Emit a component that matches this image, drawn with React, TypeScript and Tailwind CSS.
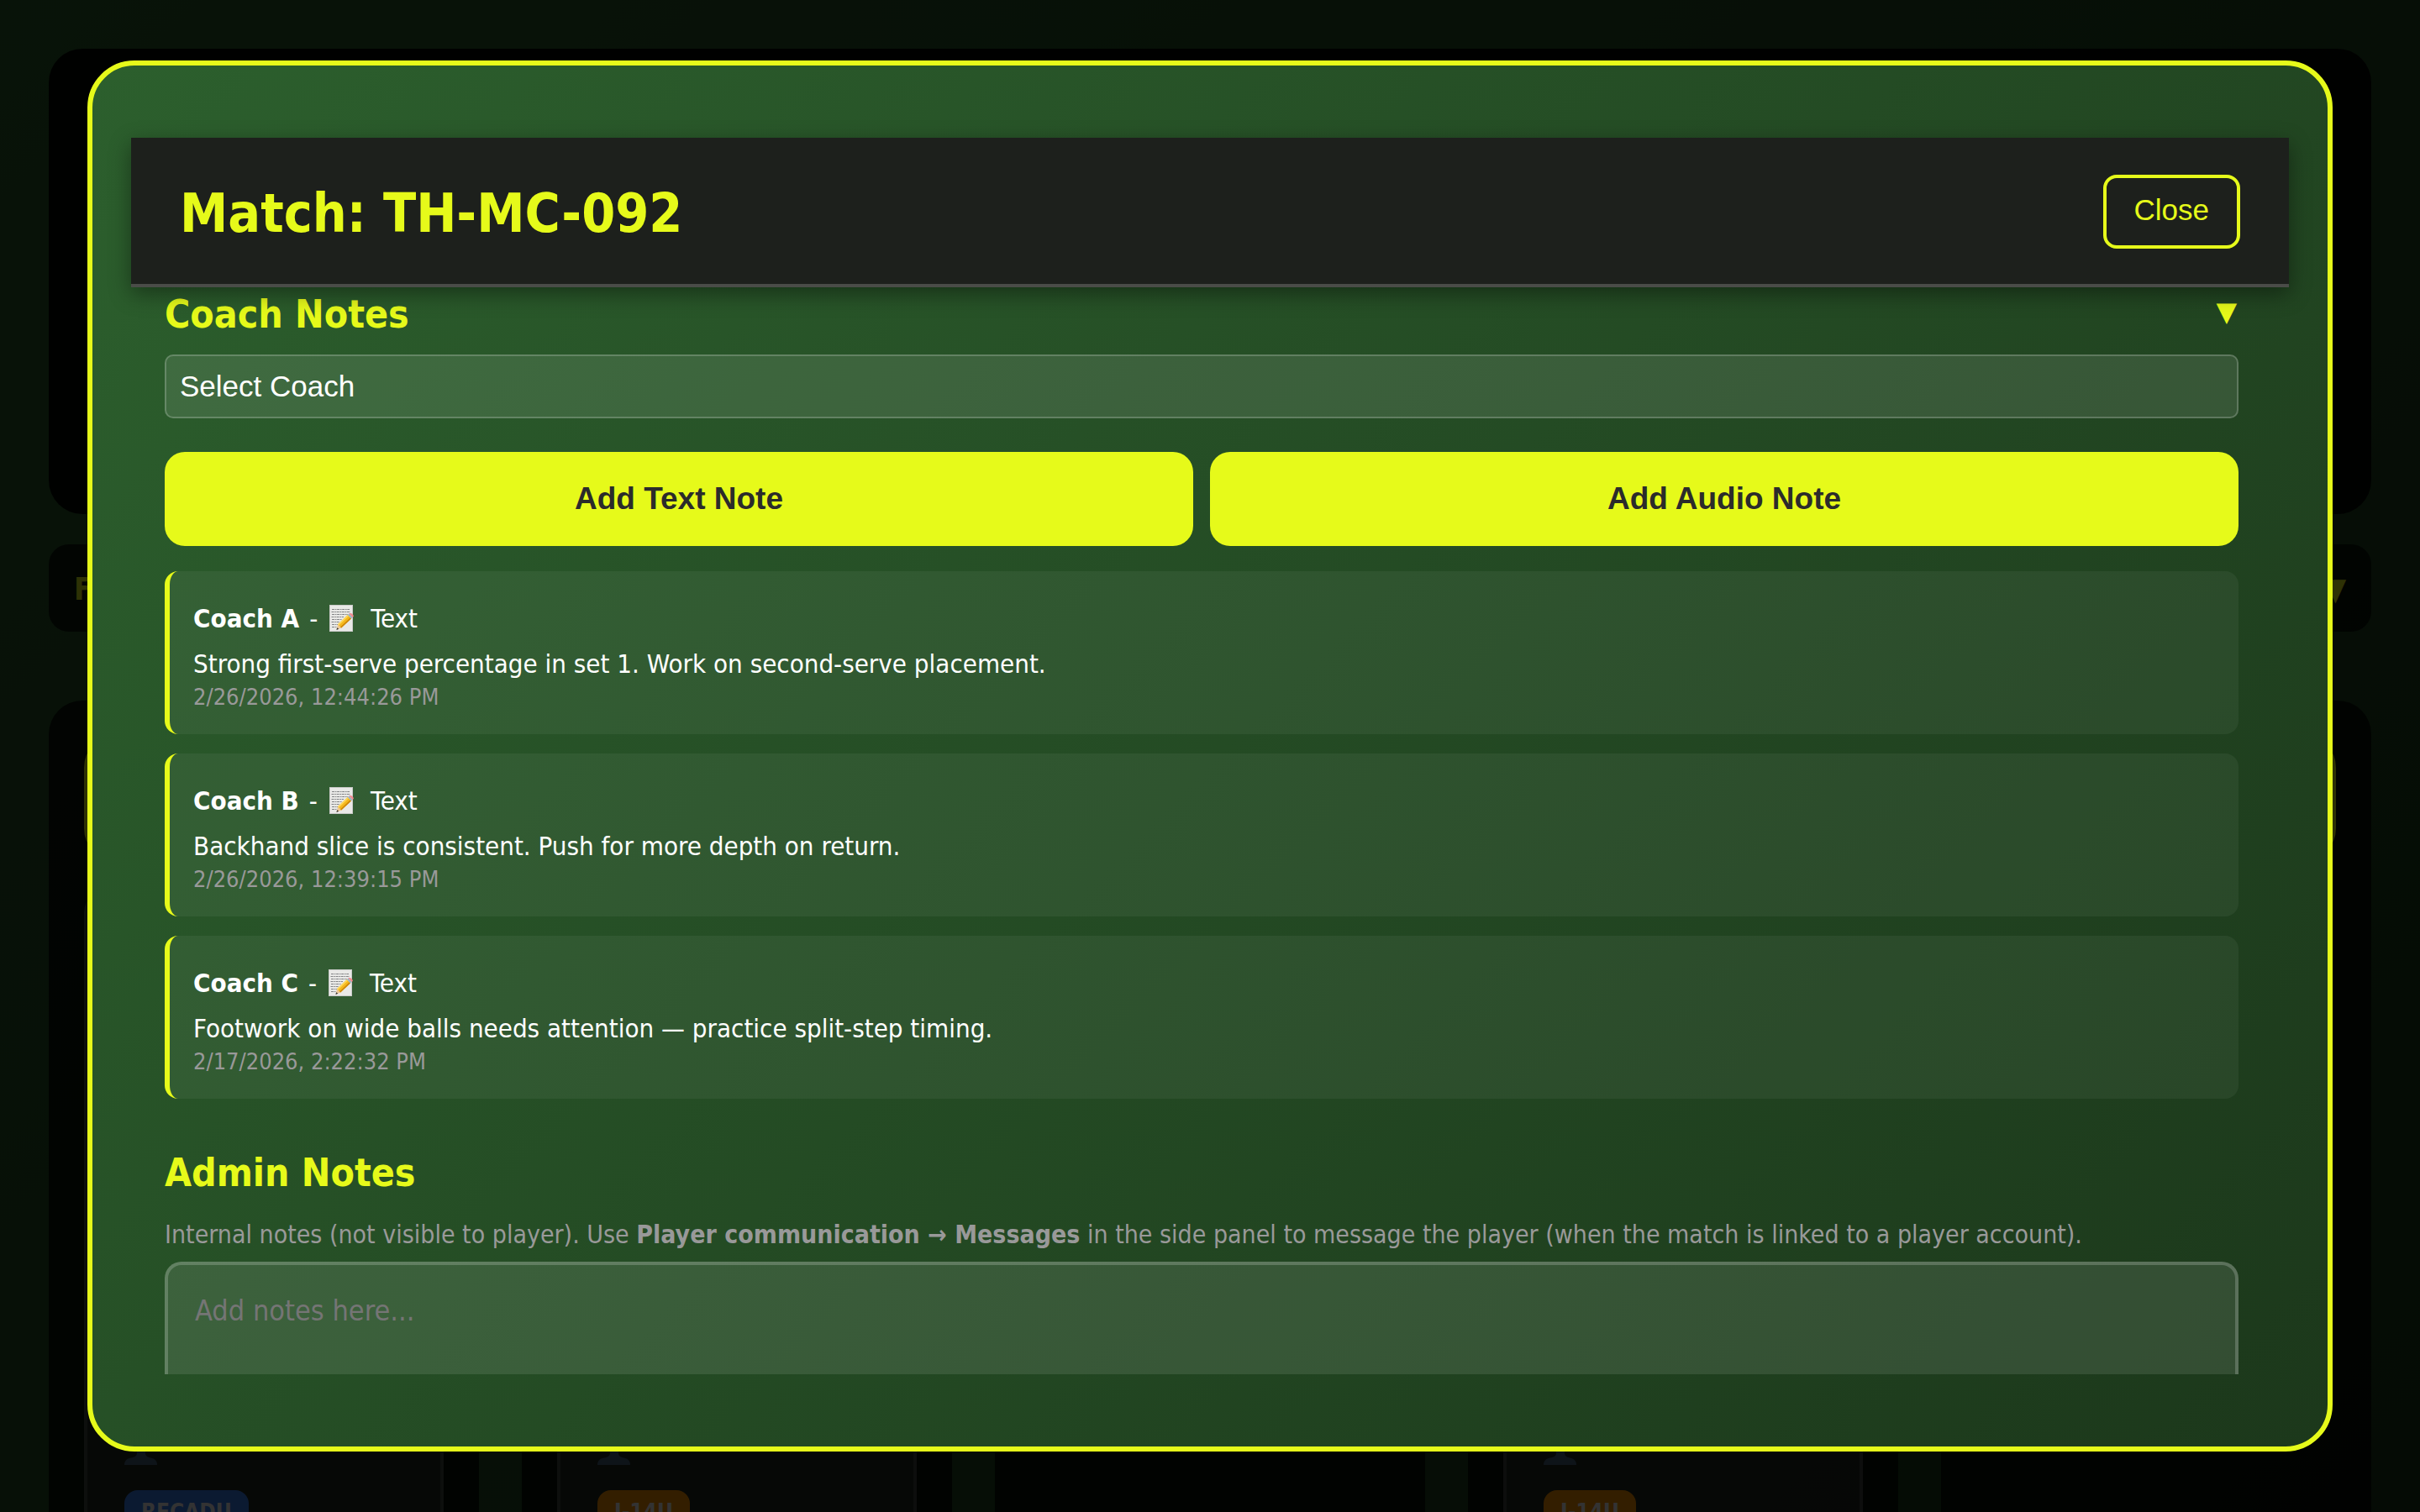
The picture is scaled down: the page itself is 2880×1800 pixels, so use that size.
import { useState } from "react";

type Note = { id: number; coach: string; kind: string; body: string; date: string };

const NOTES: Note[] = [
  {
    id: 1,
    coach: "Coach A",
    kind: "Text",
    body: "Strong first-serve percentage in set 1. Work on second-serve placement.",
    date: "2/26/2026, 12:44:26 PM",
  },
  {
    id: 2,
    coach: "Coach B",
    kind: "Text",
    body: "Backhand slice is consistent. Push for more depth on return.",
    date: "2/26/2026, 12:39:15 PM",
  },
  {
    id: 3,
    coach: "Coach C",
    kind: "Text",
    body: "Footwork on wide balls needs attention — practice split-step timing.",
    date: "2/17/2026, 2:22:32 PM",
  },
];

type Column = { id: number; badge?: string; badgeClass?: string };

const COLUMNS: Column[] = [
  { id: 1, badge: "RECADU", badgeClass: "bg-[#3b82f6]" },
  { id: 2, badge: "J-14U", badgeClass: "bg-[#ff9800]" },
  { id: 3 },
  { id: 4, badge: "J-14U", badgeClass: "bg-[#ff9800]" },
  { id: 5 },
];

export default function App() {
  return (
    <div className="relative h-screen overflow-hidden bg-linear-135 from-[#2c5f2d] to-[#1a3a1a] font-['DejaVu_Sans_Condensed','DejaVu_Sans',sans-serif] text-white">
      <Board />
      <div className="absolute inset-0 flex items-center justify-center bg-black/80 px-26 py-18">
        <MatchDialog />
      </div>
    </div>
  );
}

function Board() {
  return (
    <div aria-hidden="true" className="flex h-full flex-col px-[58px] pt-[58px]">
      <div className="h-[554px] shrink-0 rounded-[40px] bg-black/90" />
      <div className="mt-9 flex h-[104px] shrink-0 items-center justify-between rounded-3xl bg-black/70 px-[30px] pt-1 text-[37px] font-bold text-[#e6fa1a]">
        <span>Filters</span>
        <span>▼</span>
      </div>
      <div className="mt-[82px] grid min-h-0 flex-1 grid-cols-5 gap-[51px]">
        {COLUMNS.map((column) => (
          <div key={column.id} className="flex flex-col rounded-t-[40px] bg-black/75 px-[42px] pt-10">
            <div className="h-[152px] shrink-0 rounded-[40px] border-4 border-[#e6fa1a]" />
            {column.badge && (
              <div className="mt-9 flex flex-1 flex-col rounded-t-3xl border-4 border-white/15 bg-white/10 px-11 pt-[618px]">
                <PersonIcon />
                <span
                  className={`mt-[30px] self-start rounded-2xl px-5 pt-2.5 text-[26px] leading-8 font-bold ${column.badgeClass}`}
                >
                  {column.badge}
                </span>
              </div>
            )}
          </div>
        ))}
      </div>
    </div>
  );
}

function MatchDialog() {
  const [open, setOpen] = useState(true);

  return (
    <div
      role="dialog"
      aria-labelledby="match-title"
      className="flex h-full w-full flex-col rounded-[56px] border-6 border-[#e6fa1a] bg-linear-135 from-[#2c5f2d] to-[#1c381b] px-[46px] py-[86px]"
    >
      <header className="relative z-10 flex shrink-0 items-center justify-between border-b-4 border-[#4a4c48] bg-[#1d201c] px-[58px] pt-[44px] pb-[42px] shadow-[0_8px_24px_rgba(0,0,0,0.4)]">
        <h2 id="match-title" className="pt-1 text-[64px] leading-20 font-bold text-[#e6fa1a]">
          Match: TH-MC-092
        </h2>
        <button
          type="button"
          className="rounded-2xl border-4 border-[#e6fa1a] px-[33px] pt-[18px] pb-[22px] font-['Liberation_Sans',sans-serif] text-[35px] leading-10 text-[#e6fa1a]"
        >
          Close
        </button>
      </header>

      <div className="min-h-0 flex-1 overflow-hidden pr-[60px] pl-10">
        <section>
          <div className="flex items-center justify-between pb-1 text-[#e6fa1a]">
            <h3 className="text-[46px] leading-16 font-bold">Coach Notes</h3>
            <button
              type="button"
              aria-label="Toggle coach notes"
              aria-expanded={open}
              onClick={() => setOpen(!open)}
              className="pr-0.5 pb-1.5 font-['DejaVu_Sans',sans-serif] text-[32px] leading-10"
            >
              ▼
            </button>
          </div>

          {open && (
            <>
              <select
                aria-label="Coach"
                className="mt-3 block h-19 w-full appearance-none rounded-[10px] border-2 border-white/20 bg-white/10 px-4 font-['Liberation_Sans',sans-serif] text-[35px] text-white"
              >
                <option>Select Coach</option>
              </select>
              <div className="mt-10 flex gap-5">
                <NoteButton label="Add Text Note" />
                <NoteButton label="Add Audio Note" />
              </div>
              <ul className="mt-[30px] space-y-[23px]">
                {NOTES.map((note) => (
                  <NoteCard key={note.id} note={note} />
                ))}
              </ul>
            </>
          )}
        </section>

        <section className="mt-14">
          <h3 className="text-[46px] leading-16 font-bold text-[#e6fa1a]">Admin Notes</h3>
          <p className="mt-[22px] text-[30px] leading-10 text-[#999]">
            Internal notes (not visible to player). Use <strong>Player communication → Messages</strong> in the side
            panel to message the player (when the match is linked to a player account).
          </p>
          <textarea
            aria-label="Admin notes"
            placeholder="Add notes here..."
            className="mt-3 block h-60 w-full resize-none rounded-[20px] border-4 border-white/20 bg-white/10 px-8 py-[30px] text-[34px] leading-12 placeholder:text-[#757575]"
          />
        </section>
      </div>
    </div>
  );
}

function NoteButton({ label }: { label: string }) {
  return (
    <button
      type="button"
      className="h-28 flex-1 rounded-3xl bg-[#e6fa1a] font-['Liberation_Sans',sans-serif] text-[37px] font-bold text-[#2b2b2b]"
    >
      {label}
    </button>
  );
}

function NoteCard({ note }: { note: Note }) {
  return (
    <li className="h-[194px] rounded-2xl border-l-6 border-[#e6fa1a] bg-white/5 px-7 pt-9 text-[31px]">
      <div className="flex items-center leading-10">
        <strong>{note.coach}</strong>
        <span className="ml-3">-</span>
        <MemoIcon />
        <span className="ml-5">{note.kind}</span>
      </div>
      <p className="mt-3 leading-11">{note.body}</p>
      <time className="block text-[27px] leading-9 text-[#999]">{note.date}</time>
    </li>
  );
}

function MemoIcon() {
  return (
    <svg viewBox="0 0 29 32" className="ml-[14px] h-8 w-[29px]" aria-hidden="true">
      <rect x="0.5" y="0.5" width="27" height="31" fill="#e9e9e7" stroke="#c9cac8" />
      <g fill="none" stroke="#77787a" strokeWidth="0.9" strokeDasharray="3 0.8 1.6 0.7">
        <path d="M3 5.5H24M2.5 8.5H25M3 11.5H22M2.5 14.5H17M3 17.5H15M2.5 20.5H12M3 23.5H10M3 26.5H9" />
      </g>
      <path d="M8.5 30 10 23.2 14.2 27.6Z" fill="#ecc795" />
      <path d="M8.5 30 9.1 27.2 11.2 28.8Z" fill="#333" />
      <path d="M10 23.2 21.8 12 26 16.4 14.2 27.6Z" fill="#f5b81c" />
      <path d="M10 23.2 21.8 12 23 13.3 11.2 24.5Z" fill="#ffd95a" />
      <path d="M13 26.4 24.8 15.2 26 16.4 14.2 27.6Z" fill="#cc860b" />
      <path d="M21.8 12 23.4 10.5 27.6 14.9 26 16.4Z" fill="#9db3bf" />
      <path d="M23.4 10.5C25.5 8.6 31 12.6 27.6 14.9Z" fill="#ef8a8f" />
    </svg>
  );
}

function PersonIcon() {
  return (
    <svg viewBox="0 0 40 60" className="h-15 w-10" aria-hidden="true">
      <circle cx="20" cy="22" r="16" fill="#49657f" />
      <path d="M15 34H25V46C25 50 29 51 33 52 37 53 39 56 39 60H0C0 56 2 53 6 52 11 51 15 50 15 46Z" fill="#49657f" />
    </svg>
  );
}
